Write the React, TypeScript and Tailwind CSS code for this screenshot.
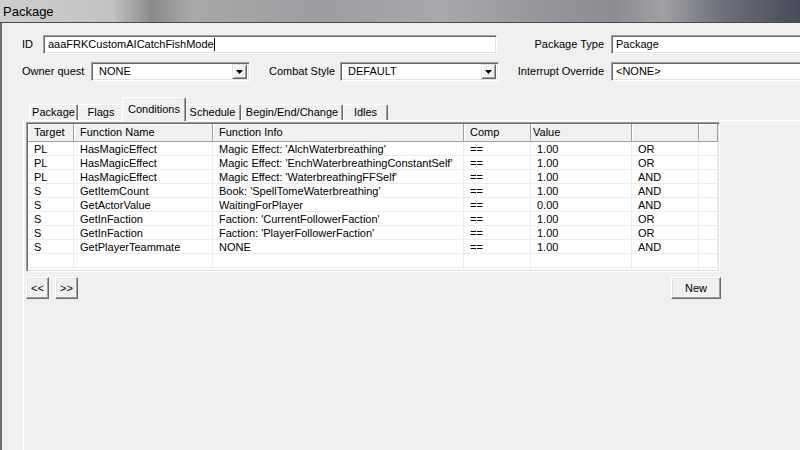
import { ReactNode } from 'react';

const font = { fontFamily: '"Liberation Sans", Arial, sans-serif' };

// sunken 3D field, like a classic Win32 edit box
function Field({ w, children, combo }: { w: string; children?: ReactNode; combo?: boolean }) {
    return (
        <div
            className={`${w} h-[19px] shrink-0 flex items-center bg-white border border-t-[#a0a0a0] border-l-[#a0a0a0] border-b-white border-r-white shadow-[inset_1px_1px_0_#696969,inset_-1px_-1px_0_#e3e3e3] pl-[4px] pr-[2px]`}
        >
            <div className="flex-1 flex items-center whitespace-nowrap overflow-hidden">{children}</div>
            {combo && (
                <div className="w-[15px] h-[15px] shrink-0 flex items-center justify-center bg-[#f0f0f0] border border-t-[#e3e3e3] border-l-[#e3e3e3] border-b-[#696969] border-r-[#696969] shadow-[inset_1px_1px_0_#fff,inset_-1px_-1px_0_#a0a0a0]">
                    <svg width="7" height="4" viewBox="0 0 7 4">
                        <path d="M0 0h7L3.5 4z" fill="#000" />
                    </svg>
                </div>
            )}
        </div>
    );
}

function Button({ w, children }: { w: string; children: ReactNode }) {
    return (
        <div
            className={`${w} h-[22px] flex items-center justify-center bg-[#f0f0f0] border border-t-white border-l-white border-b-[#696969] border-r-[#696969] shadow-[inset_-1px_-1px_0_#a0a0a0,inset_1px_1px_0_#e3e3e3] text-[11px] text-black`}
        >
            {children}
        </div>
    );
}

const tabs = [
    { label: 'Package', w: 'w-[49px]' },
    { label: 'Flags', w: 'w-[46px]' },
    { label: 'Conditions', w: 'w-[58px]', active: true },
    { label: 'Schedule', w: 'w-[57px]' },
    { label: 'Begin/End/Change', w: 'w-[102px]' },
    { label: 'Idles', w: 'w-[45px]' },
];

const cols = [
    { name: 'Target', w: 'w-[46px]' },
    { name: 'Function Name', w: 'w-[139px]' },
    { name: 'Function Info', w: 'w-[251px]' },
    { name: 'Comp', w: 'w-[67px]' },
    { name: 'Value', w: 'w-[101px]' },
    { name: '', w: 'w-[67px]' },
    { name: '', w: 'flex-1' },
];

const rows = [
    ['PL', 'HasMagicEffect', "Magic Effect: 'AlchWaterbreathing'", '==', '1.00', 'OR'],
    ['PL', 'HasMagicEffect', "Magic Effect: 'EnchWaterbreathingConstantSelf'", '==', '1.00', 'OR'],
    ['PL', 'HasMagicEffect', "Magic Effect: 'WaterbreathingFFSelf'", '==', '1.00', 'AND'],
    ['S', 'GetItemCount', "Book: 'SpellTomeWaterbreathing'", '==', '1.00', 'AND'],
    ['S', 'GetActorValue', 'WaitingForPlayer', '==', '0.00', 'AND'],
    ['S', 'GetInFaction', "Faction: 'CurrentFollowerFaction'", '==', '1.00', 'OR'],
    ['S', 'GetInFaction', "Faction: 'PlayerFollowerFaction'", '==', '1.00', 'OR'],
    ['S', 'GetPlayerTeammate', 'NONE', '==', '1.00', 'AND'],
    ['', '', '', '', '', ''],
    ['', '', '', '', '', ''],
];

export default function App() {
    return (
        <div className="w-[800px] h-[450px] overflow-hidden bg-[#f0f0f0] flex flex-col text-black" style={font}>
            {/* title bar (blurred aero glass) */}
            <div className="h-[23px] shrink-0 flex items-center pl-[3px] border-b border-b-[#4a4a4a] bg-[linear-gradient(90deg,#cfcfcf_0%,#c2c2c2_14%,#8a8a8c_19%,#a9a9ab_24%,#9c9da0_40%,#a8a9ac_55%,#95969b_68%,#8b8d93_77%,#a0a1a5_83%,#6f727b_90%,#474b5b_100%)]">
                <span className="text-[13px] leading-none">Package</span>
            </div>

            <div className="flex-1 flex flex-col border-l-2 border-l-[#6d6d6d] text-[11px]">
                {/* ID row */}
                <div className="mt-[12px] flex items-center">
                    <div className="w-[41px] pl-[20px] shrink-0">ID</div>
                    <Field w="w-[454px]">
                        <span>aaaFRKCustomAICatchFishMode</span>
                        <span className="w-px h-[13px] bg-black" />
                    </Field>
                    <div className="w-[114px] shrink-0 text-right pr-[7px]">Package Type</div>
                    <Field w="w-[200px]">Package</Field>
                </div>

                {/* owner quest row */}
                <div className="mt-[8px] flex items-center">
                    <div className="w-[89px] pl-[20px] shrink-0">Owner quest</div>
                    <Field w="w-[159px]" combo>
                        <span className="pl-[3px]">NONE</span>
                    </Field>
                    <div className="w-[90px] shrink-0 pl-[19px]">Combat Style</div>
                    <Field w="w-[159px]" combo>
                        <span className="pl-[3px]">DEFAULT</span>
                    </Field>
                    <div className="w-[112px] shrink-0 text-right pr-[7px]">Interrupt Override</div>
                    <Field w="w-[200px]">&lt;NONE&gt;</Field>
                </div>

                {/* tabs */}
                <div className="mt-[20px] h-[19px] flex items-end pl-[27px] relative z-10">
                    {tabs.map((t) =>
                        t.active ? (
                            <div
                                key={t.label}
                                className={`${t.w} -mx-[2px] box-content px-[2px] h-[20px] -mb-px flex items-start justify-center pt-[3px] bg-[#f0f0f0] border-l border-t border-l-white border-t-white border-r border-r-[#696969] shadow-[inset_-1px_0_0_#a0a0a0] relative z-10 rounded-t-[2px]`}
                            >
                                {t.label}
                            </div>
                        ) : (
                            <div
                                key={t.label}
                                className={`${t.w} h-[16px] flex items-center justify-center bg-[#f0f0f0] border-l border-t border-l-white border-t-white border-r border-r-[#696969] shadow-[inset_-1px_0_0_#a0a0a0] rounded-t-[2px]`}
                            >
                                {t.label}
                            </div>
                        )
                    )}
                </div>

                {/* tab page */}
                <div className="ml-[21px] flex-1 border-l border-t border-white">
                    <div className="ml-[2px] mt-px w-[694px] h-[150px] flex flex-col bg-white border border-t-[#a0a0a0] border-l-[#a0a0a0] border-b-white border-r-white shadow-[inset_1px_1px_0_#696969,inset_-1px_-1px_0_#e3e3e3] p-px overflow-hidden">
                        {/* header */}
                        <div className="h-[18px] shrink-0 flex bg-[#f0f0f0]">
                            {cols.map((c, i) => (
                                <div
                                    key={i}
                                    className={`${c.w} shrink-0 h-full flex items-center border-r border-b border-r-[#a0a0a0] border-b-[#a0a0a0] shadow-[inset_1px_1px_0_#fff] whitespace-nowrap ${
                                        c.name === 'Value' ? 'pl-[2px]' : 'pl-[6px]'
                                    }`}
                                >
                                    {c.name}
                                </div>
                            ))}
                        </div>
                        {/* body */}
                        {rows.map((r, ri) => (
                            <div key={ri} className="h-[14px] shrink-0 flex border-b border-b-[#ededed]">
                                {cols.map((c, ci) => (
                                    <div
                                        key={ci}
                                        className={`${c.w} shrink-0 h-full leading-[14px] pl-[6px] border-r border-r-[#ededed] whitespace-nowrap overflow-hidden`}
                                    >
                                        {r[ci] ?? ''}
                                    </div>
                                ))}
                            </div>
                        ))}
                    </div>

                    {/* buttons */}
                    <div className="ml-[2px] mt-[5px] w-[695px] flex items-center">
                        <Button w="w-[23px]">&lt;&lt;</Button>
                        <div className="w-[6px]" />
                        <Button w="w-[23px]">&gt;&gt;</Button>
                        <div className="flex-1" />
                        <Button w="w-[50px]">New</Button>
                    </div>
                </div>
            </div>
        </div>
    );
}
